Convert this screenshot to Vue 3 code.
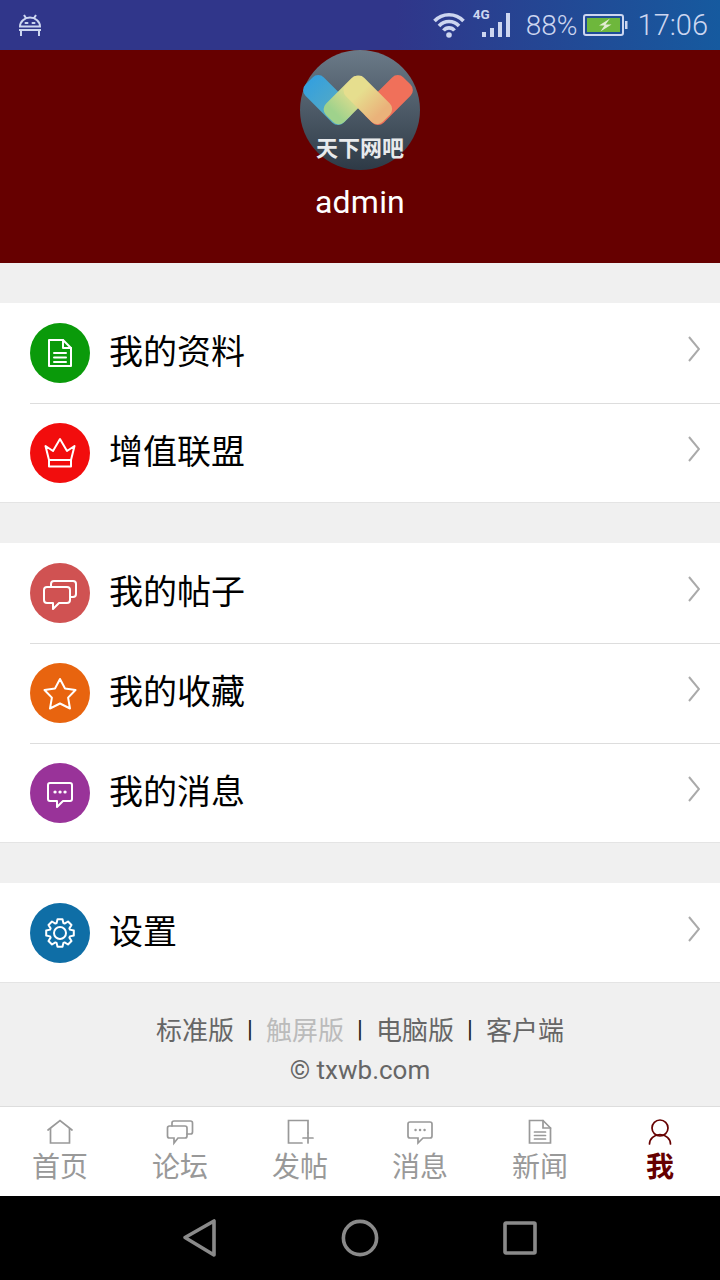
<template>
  <div class="page">
    <div class="status-bar">
      <svg class="android" viewBox="0 0 24 22" fill="none" stroke="currentColor" stroke-width="2">
        <path d="M2 12.5a10 9 0 0 1 20 0ZM6 1l2.5 4M18 1l-2.5 4M1 16H23M3 16V22M21 16V22" />
        <path d="M7.5 9h2M14.5 9h2" stroke-linecap="round" />
      </svg>
      <svg class="wifi" viewBox="0 0 34 26" fill="none" stroke="currentColor" stroke-width="3.6">
        <path d="M2.5 9a20 20 0 0 1 29 0M7 14a13.5 13.5 0 0 1 20 0M11.5 18.5a7 7 0 0 1 11 0" />
        <circle cx="17" cy="23" r="2.8" fill="currentColor" stroke="none" />
      </svg>
      <div class="signal">
        <span class="net">4G</span>
        <i class="bar b1"></i><i class="bar b2"></i><i class="bar b3"></i><i class="bar b4"></i>
      </div>
      <span class="percent">88%</span>
      <svg class="battery" viewBox="0 0 45 22">
        <rect x="1" y="1" width="39" height="20" rx="2" fill="none" stroke="currentColor" stroke-width="2" />
        <rect x="4" y="4" width="33" height="14" fill="#6eb73c" />
        <path d="M42 7h2.5v8H42Z" fill="currentColor" />
        <path d="M27 4.5L16 11.5H21.5L17.5 17.5L28.5 10.5H22.5Z" fill="#e3ecd2" />
      </svg>
      <span class="time">17:06</span>
    </div>

    <div class="profile">
      <svg class="avatar" viewBox="0 0 120 120">
        <defs>
          <linearGradient id="avatarBg" x1="0" y1="0" x2="0" y2="1">
            <stop offset="0" stop-color="#6b7a88" />
            <stop offset="1" stop-color="#2e3a46" />
          </linearGradient>
          <!-- rects are rotated, so these run along each arm -->
          <linearGradient id="armBlue">
            <stop offset="0" stop-color="#35a0de" />
            <stop offset="0.6" stop-color="#4fa8c8" />
          </linearGradient>
          <linearGradient id="armGreen">
            <stop offset="0.15" stop-color="#9fd28c" />
            <stop offset="0.7" stop-color="#e6de8e" />
          </linearGradient>
          <linearGradient id="armYellow">
            <stop offset="0.3" stop-color="#e6de8e" />
            <stop offset="0.85" stop-color="#eab27a" />
          </linearGradient>
        </defs>
        <circle cx="60" cy="60" r="60" fill="url(#avatarBg)" />
        <rect x="0" y="-13" width="54" height="26" rx="8" fill="url(#armBlue)" transform="translate(9 31) rotate(45)" />
        <rect x="0" y="-13" width="54" height="26" rx="8" fill="#f0705a" transform="translate(107 31) rotate(135)" />
        <rect x="0" y="-13" width="52" height="26" rx="8" fill="url(#armGreen)" transform="translate(29.5 68.5) rotate(-45)" />
        <rect x="0" y="-13" width="52" height="26" rx="8" fill="url(#armYellow)" transform="translate(49.5 31.5) rotate(45)" />
        <text class="avatar-text" x="60" y="106" text-anchor="middle" textLength="88">天下网吧</text>
      </svg>
      <div class="name">admin</div>
    </div>

    <div v-for="(group, g) in groups" :key="g" class="group">
      <div v-for="item in group" :key="item.label" class="row">
        <svg class="row-icon" viewBox="0 0 60 60" fill="none" stroke="#fff" stroke-width="2" stroke-linejoin="round" stroke-linecap="round">
          <circle cx="30" cy="30" r="30" :class="item.color" stroke="none" />
          <path v-for="d in rowIcons[item.icon].lines" :key="d" :d="d" />
          <path v-for="d in rowIcons[item.icon].dots" :key="d" :d="d" stroke-width="3.2" />
        </svg>
        <span class="row-label">{{ item.label }}</span>
        <svg class="chevron" viewBox="0 0 12 26" fill="none" stroke="#aaa" stroke-width="2">
          <path d="M1 1L11 13L1 25" />
        </svg>
      </div>
    </div>

    <div class="footer">
      <div class="links">
        <template v-for="(link, i) in links" :key="link">
          <span v-if="i" class="sep">|</span>
          <span :class="{ current: link === '触屏版' }">{{ link }}</span>
        </template>
      </div>
      <div class="copy">© txwb.com</div>
    </div>

    <div class="tabbar">
      <div v-for="tab in tabs" :key="tab.label" class="tab" :class="{ active: tab.active }">
        <svg class="tab-icon" viewBox="0 0 28 28" fill="none" stroke="currentColor" stroke-width="1.7" stroke-linecap="round">
          <path v-for="d in tabIcons[tab.icon].lines" :key="d" :d="d" />
          <path v-for="d in tabIcons[tab.icon].dots" :key="d" :d="d" stroke-width="2.4" />
        </svg>
        <span class="tab-label">{{ tab.label }}</span>
      </div>
    </div>

    <div class="navbar">
      <svg class="nav-icon" viewBox="0 0 40 40" fill="none" stroke="#8a8a8a" stroke-width="3.6" stroke-linejoin="round">
        <path d="M5 19.5L34 3V37Z" />
      </svg>
      <svg class="nav-icon" viewBox="0 0 40 40" fill="none" stroke="#8a8a8a" stroke-width="3.6">
        <circle cx="20" cy="20" r="16.6" />
      </svg>
      <svg class="nav-icon" viewBox="0 0 40 40" fill="none" stroke="#8a8a8a" stroke-width="3.6" stroke-linejoin="round">
        <rect x="5" y="5" width="30" height="30" rx="1" />
      </svg>
    </div>
  </div>
</template>

<script setup>
// gear outline, teeth go round the centre
function gearPath(cx, cy, outer, inner, teeth) {
  const pts = []
  const step = (Math.PI * 2) / teeth
  for (let i = 0; i < teeth; i++) {
    const a = i * step - Math.PI / 2
    const offsets = [[-0.3, inner], [-0.16, outer], [0.16, outer], [0.3, inner]]
    offsets.forEach(([o, r]) => {
      const x = cx + Math.cos(a + o * step * 1.4) * r
      const y = cy + Math.sin(a + o * step * 1.4) * r
      pts.push(`${x.toFixed(1)} ${y.toFixed(1)}`)
    })
  }
  return `M${pts.join('L')}Z`
}

const rowIcons = {
  doc: { lines: ['M19 17H33L41 25V43H19Z', 'M33 17V25H41', 'M24 30H36', 'M24 34.5H36', 'M24 39H36'] },
  crown: { lines: ['M19 43.5H41V37L44.5 23L37 28L30 16L23 28L15.5 23L19 37Z', 'M19 37H41'] },
  chats: {
    lines: [
      'M17 24H37a3 3 0 0 1 3 3V37a3 3 0 0 1-3 3H29L23 46V40H17a3 3 0 0 1-3-3V27a3 3 0 0 1 3-3Z',
      'M21 23V21a3 3 0 0 1 3-3H43a3 3 0 0 1 3 3V31a3 3 0 0 1-3 3H40'
    ]
  },
  star: { lines: ['M30 16L35 25.5L45.5 27L38.1 34.6L40 45.5L30 40.5L20 45.5L21.9 34.6L14.5 27L25 25.5Z'] },
  message: {
    lines: ['M20 20H40a2 2 0 0 1 2 2V36a2 2 0 0 1-2 2H33L27 44V38H20a2 2 0 0 1-2-2V22a2 2 0 0 1 2-2Z'],
    dots: ['M25 29h.1', 'M30 29h.1', 'M35 29h.1']
  },
  gear: { lines: [gearPath(30, 30, 14, 10.5, 8), 'M36 30a6 6 0 1 1-12 0a6 6 0 1 1 12 0Z'] }
}

const groups = [
  [
    { label: '我的资料', icon: 'doc', color: 'green' },
    { label: '增值联盟', icon: 'crown', color: 'red' }
  ],
  [
    { label: '我的帖子', icon: 'chats', color: 'rose' },
    { label: '我的收藏', icon: 'star', color: 'orange' },
    { label: '我的消息', icon: 'message', color: 'purple' }
  ],
  [
    { label: '设置', icon: 'gear', color: 'blue' }
  ]
]

const links = ['标准版', '触屏版', '电脑版', '客户端']

const tabIcons = {
  home: { lines: ['M2 12L14 2.5L26 12', 'M4.5 10.5V25H23.5V10.5'] },
  forum: {
    lines: [
      'M3.5 8H19a2 2 0 0 1 2 2V18a2 2 0 0 1-2 2H12L8 25V20H3.5a2 2 0 0 1-2-2V10a2 2 0 0 1 2-2Z',
      'M6 8V5a2 2 0 0 1 2-2H24.5a2 2 0 0 1 2 2V14a2 2 0 0 1-2 2H21'
    ]
  },
  post: { lines: ['M22 15V2.5H2.5V25H16', 'M17 20H27', 'M22 15V25'] },
  message: {
    lines: ['M4 4H24a2 2 0 0 1 2 2V18a2 2 0 0 1-2 2H17L12 25V20H4a2 2 0 0 1-2-2V6a2 2 0 0 1 2-2Z'],
    dots: ['M9.5 12h.1', 'M14 12h.1', 'M18.5 12h.1']
  },
  news: { lines: ['M3.5 2.5H17L24.5 10V25H3.5Z', 'M17 2.5V10H24.5', 'M8.5 14H19.5', 'M8.5 17.5H19.5', 'M8.5 21H19.5'] },
  me: { lines: ['M22 10a8 8 0 1 1-16 0a8 8 0 1 1 16 0Z', 'M3.5 26a10.5 9.5 0 0 1 21 0'] }
}

const tabs = [
  { label: '首页', icon: 'home' },
  { label: '论坛', icon: 'forum' },
  { label: '发帖', icon: 'post' },
  { label: '消息', icon: 'message' },
  { label: '新闻', icon: 'news' },
  { label: '我', icon: 'me', active: true }
]
</script>

<style scoped>
.page {
  width: 720px;
  height: 1280px;
  display: flex;
  flex-direction: column;
  background: #f0f0f0;
  overflow: hidden;
  font-family: "Noto Sans CJK SC", "Noto Sans", sans-serif;
}

.status-bar {
  height: 50px;
  flex: none;
  display: flex;
  align-items: center;
  padding: 0 12px 0 18px;
  box-sizing: border-box;
  color: #cdd6f0;
  background: linear-gradient(90deg, #30368a 0, #30368a 55%, #165a9f 100%);
  font-family: Roboto, sans-serif;
}

.android {
  width: 24px;
  height: 22px;
}

.wifi {
  width: 34px;
  height: 26px;
  margin-left: auto;
  margin-bottom: 1px;
}

.signal {
  position: relative;
  width: 38px;
  height: 30px;
  margin-left: 6px;
  margin-bottom: 6px;
  display: flex;
  align-items: flex-end;
  justify-content: flex-end;
  gap: 4px;
}

.net {
  position: absolute;
  left: 1px;
  top: 0;
  font-size: 13.5px;
  line-height: 14px;
  font-weight: 700;
}

.bar {
  width: 4px;
  background: currentColor;
}

.b1 { height: 5px; }
.b2 { height: 9px; }
.b3 { height: 15px; }
.b4 { height: 24px; }

.percent {
  margin-left: 16px;
  margin-top: 2px;
  font-size: 28px;
  font-weight: 300;
  line-height: 50px;
}

.battery {
  width: 45px;
  height: 22px;
  margin-left: 5px;
}

.time {
  margin-left: 10px;
  font-size: 29px;
  font-weight: 300;
  line-height: 50px;
}

.profile {
  height: 213px;
  flex: none;
  background: #660000;
  display: flex;
  flex-direction: column;
  align-items: center;
}

.avatar {
  width: 120px;
  height: 120px;
}

.avatar-text {
  font-size: 22px;
  font-weight: 700;
  fill: #e8eaec;
}

.name {
  margin-top: 11px;
  color: #fff;
  font-family: Roboto, sans-serif;
  font-size: 32px;
  line-height: 42px;
  letter-spacing: 0.2px;
}

.group {
  flex: none;
  margin-top: 40px;
  background: #fff;
  border-bottom: 1px solid #e4e4e4;
}

.row {
  display: flex;
  align-items: center;
  margin-left: 30px;
  padding: 19px 20px 20px 0;
  border-bottom: 1px solid #ddd;
}

.row:first-child {
  padding-top: 20px;
}

.row:last-child {
  padding-bottom: 19px;
  border-bottom: none;
}

.row-icon {
  width: 60px;
  height: 60px;
  flex: none;
}

.green { fill: #0a9a0a; }
.red { fill: #f20d0d; }
.rose { fill: #d05252; }
.orange { fill: #e8640f; }
.purple { fill: #993399; }
.blue { fill: #0f6ea6; }

.row-label {
  margin-left: 19px;
  margin-bottom: 6px;
  color: #000;
  font-size: 34px;
  line-height: 44px;
}

.chevron {
  width: 12px;
  height: 26px;
  margin-left: auto;
  margin-bottom: 8px;
}

.footer {
  flex: 1;
  padding-top: 26px;
  text-align: center;
  color: #666;
}

.links {
  display: flex;
  justify-content: center;
  font-size: 26px;
  line-height: 40px;
}

.sep {
  width: 32px;
  color: #222;
  font-family: Roboto, sans-serif;
  font-size: 24px;
}

.current {
  color: #bbb;
}

.copy {
  margin-top: 1px;
  font-family: Roboto, sans-serif;
  font-size: 26px;
  line-height: 40px;
}

.tabbar {
  height: 90px;
  box-sizing: border-box;
  flex: none;
  display: flex;
  background: #fff;
  border-top: 1px solid #ddd;
}

.tab {
  width: 120px;
  display: flex;
  flex-direction: column;
  align-items: center;
  padding-top: 11px;
  box-sizing: border-box;
  color: #999;
}

.tab.active {
  color: #660000;
}

.tab-icon {
  width: 28px;
  height: 28px;
}

.tab-label {
  font-size: 28px;
  line-height: 40px;
  margin-top: -1px;
}

.tab.active .tab-label {
  font-weight: 700;
}

.navbar {
  height: 84px;
  flex: none;
  background: #000;
  display: flex;
  align-items: center;
  justify-content: center;
  gap: 120px;
}

.nav-icon {
  width: 40px;
  height: 40px;
  margin-top: -1px;
}
</style>
